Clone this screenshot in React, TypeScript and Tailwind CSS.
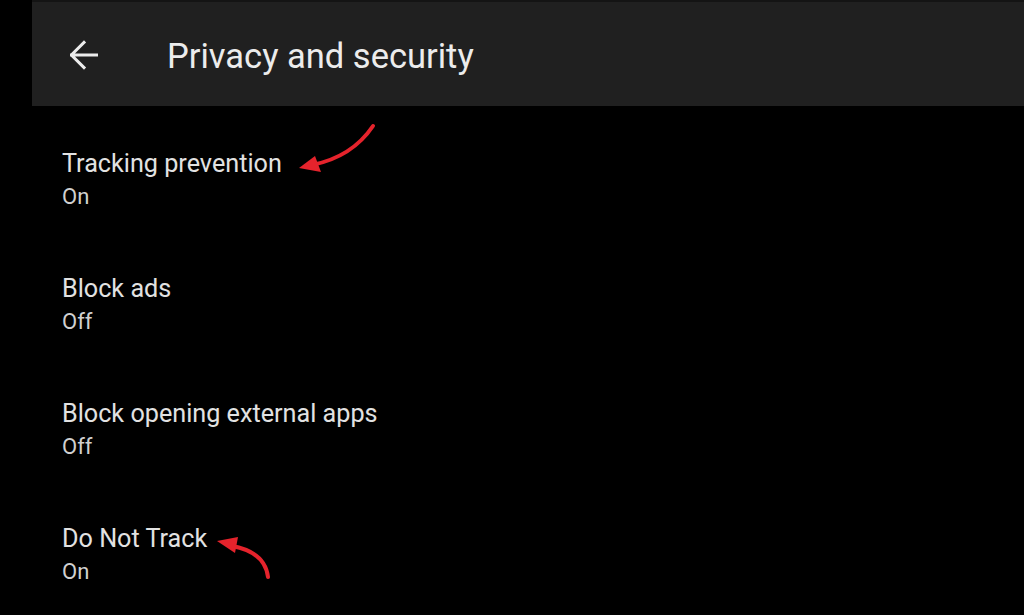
import React from "react";

const items = [
  { title: "Tracking prevention", value: "On" },
  { title: "Block ads", value: "Off" },
  { title: "Block opening external apps", value: "Off" },
  { title: "Do Not Track", value: "On" },
];

export default function App() {
  return (
    <div
      className="relative w-[1024px] h-[615px] bg-black flex overflow-hidden"
      style={{ fontFamily: "Roboto, 'Noto Sans', sans-serif" }}
    >
      <div className="w-[32px] shrink-0" />
      <div className="flex-1 flex flex-col">
        <div className="h-[2px] bg-[#141414]" />
        <div className="h-[104px] bg-[#202020] flex items-center">
          <div className="ml-[38px] w-[28px] h-[30px] mt-[2px] flex items-center">
            <svg width="30" height="30" viewBox="0 0 30 30" fill="none">
              <path
                d="M1.5 15 H29 M15 1.5 L1.5 15 L15 28.5"
                stroke="#ececec"
                strokeWidth="3.2"
                strokeLinecap="square"
                strokeLinejoin="miter"
              />
            </svg>
          </div>
          <div className="ml-[69px] mt-[3px] text-[34.5px] leading-[40px] text-[#ececec]">
            Privacy and security
          </div>
        </div>
        <div className="pl-[30px] pt-[43px] flex flex-col gap-[64px]">
          {items.map((it) => (
            <div key={it.title} className="flex flex-col">
              <div className="text-[25.2px] leading-[30px] text-[#e2e2e2]">{it.title}</div>
              <div className="mt-[5px] text-[22px] leading-[26px] text-[#d0d0d0]">{it.value}</div>
            </div>
          ))}
        </div>
      </div>
      <svg
        className="absolute inset-0 pointer-events-none"
        width="1024"
        height="615"
        viewBox="0 0 1024 615"
      >
        <path d="M373 126 Q 352 157 312 165" stroke="#e5232c" strokeWidth="4" fill="none" strokeLinecap="round" />
        <polygon points="299,168 315,156 321,172" fill="#e5232c" />
        <path d="M268 577 Q 265 552 232 546" stroke="#e5232c" strokeWidth="4" fill="none" strokeLinecap="round" />
        <polygon points="217,541 238,537 235,553" fill="#e5232c" />
      </svg>
    </div>
  );
}
